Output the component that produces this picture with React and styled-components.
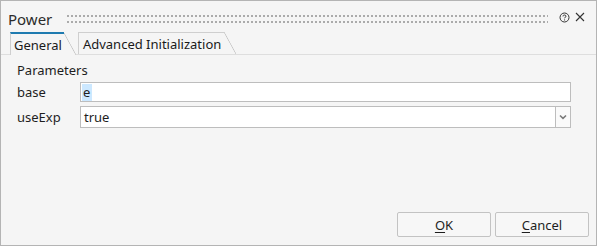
import React from 'react';
import styled, { createGlobalStyle } from 'styled-components';

const GlobalStyle = createGlobalStyle`
    html, body {
        margin: 0;
        padding: 0;
        background: #f5f5f5;
    }
    * {
        box-sizing: border-box;
    }
`;

const Dialog = styled.div`
    width: 597px;
    height: 246px;
    display: flex;
    flex-direction: column;
    border: 1px solid #b4b4b4;
    background: #f5f5f5;
    font-family: "Noto Sans", "Open Sans", sans-serif;
    font-size: 13px;
    color: #1e1e1e;
`;

const TitleBar = styled.div`
    height: 30px;
    display: flex;
    align-items: flex-start;
    padding: 0 9px 0 7px;
`;

const Title = styled.div`
    margin-top: 8px;
    font-size: 15px;
    line-height: 20px;
    color: #2b2b2b;
`;

// two rows of small dots used as the drag handle
const Grip = styled.div`
    flex: 1;
    height: 8px;
    margin: 14px 9px 0 15px;
    background: repeating-linear-gradient(90deg, #ababab 0 2px, transparent 2px 4px);
    mask-image: repeating-linear-gradient(180deg, #000 0 2px, transparent 2px 6px);
    -webkit-mask-image: repeating-linear-gradient(180deg, #000 0 2px, transparent 2px 6px);
`;

const IconButton = styled.span`
    display: flex;
    align-items: center;
    justify-content: center;
    width: 14px;
    height: 14px;
    margin-top: 9px;
    margin-left: ${p => p.gap || 0}px;
    color: #333;
`;

const TabBar = styled.div`
    display: flex;
    align-items: flex-end;
    height: 24px;
    padding-left: 9px;
    border-bottom: 1px solid #dedede;
`;

const Tab = styled.div`
    position: relative;
    height: ${p => (p.active ? 23 : 22)}px;
    margin-right: 14px;
    padding: ${p => (p.active ? '0 2px 0 3px' : '0 3px 0 4px')};
    display: flex;
    align-items: center;
    border-left: 1px solid #cfcfcf;
    border-top: ${p => (p.active ? '2px solid #1f7bb0' : '1px solid #cfcfcf')};
    color: #1a1a1a;
    margin-bottom: ${p => (p.active ? '-1px' : '0')};
    background: #f5f5f5;

    &::after {
        content: '';
        position: absolute;
        top: -1px;
        right: -12px;
        width: 12px;
        bottom: 0;
        background: linear-gradient(
            to top right,
            #f5f5f5 calc(50% - 0.7px),
            #c4c4c4 50%,
            transparent calc(50% + 0.7px)
        );
    }
`;

const Body = styled.div`
    flex: 1;
    padding: 6px 25px 0 16px;
    display: flex;
    flex-direction: column;
`;

const SectionLabel = styled.div`
    height: 18px;
    line-height: 18px;
    margin-bottom: 3px;
`;

const FieldRow = styled.div`
    display: flex;
    align-items: center;
    height: ${p => p.h}px;
    margin-bottom: 4px;
`;

const FieldLabel = styled.div`
    width: 63px;
`;

const TextBox = styled.div`
    flex: 1;
    height: 100%;
    display: flex;
    align-items: center;
    padding-left: 1px;
    background: #fff;
    border: 1px solid #bdbdbd;
`;

const Selected = styled.span`
    background: #cce8ff;
    padding: 0 2px 0 1px;
    line-height: 17px;
`;

const SelectBox = styled.div`
    flex: 1;
    height: 100%;
    display: flex;
    background: #fff;
    border: 1px solid #bdbdbd;
`;

const SelectValue = styled.div`
    flex: 1;
    display: flex;
    align-items: center;
    padding-left: 3px;
`;

const DropButton = styled.div`
    width: 15px;
    display: flex;
    align-items: center;
    justify-content: center;
    border-left: 1px solid #bdbdbd;
    background: #fafafa;
`;

const Footer = styled.div`
    display: flex;
    justify-content: flex-end;
    gap: 4px;
    padding: 0 7px 8px 0;
`;

const Button = styled.button`
    width: 94px;
    height: 25px;
    border: 1px solid #c3c3c3;
    border-radius: 2px;
    background: #f7f7f7;
    font-family: inherit;
    font-size: 13px;
    color: #1e1e1e;
    padding: 0;
    u {
        text-decoration-thickness: 1px;
        text-underline-offset: 2px;
    }
`;

export default function App() {
    return (
        <>
            <GlobalStyle />
            <Dialog>
                <TitleBar>
                    <Title>Power</Title>
                    <Grip />
                    <IconButton>
                        <svg width="11" height="11" viewBox="0 0 11 11" fill="none" stroke="#333" strokeWidth="1">
                            <circle cx="5.5" cy="5.5" r="4.5" />
                            <path d="M4 4.4 C4 3.4 4.7 3 5.5 3 C6.4 3 7 3.5 7 4.2 C7 5.1 5.6 5.2 5.6 6.3" />
                            <circle cx="5.6" cy="7.9" r="0.55" fill="#333" stroke="none" />
                        </svg>
                    </IconButton>
                    <IconButton gap={2}>
                        <svg width="10" height="10" viewBox="0 0 10 10" stroke="#333" strokeWidth="1.1">
                            <path d="M1 1 L9 9 M9 1 L1 9" />
                        </svg>
                    </IconButton>
                </TitleBar>
                <TabBar>
                    <Tab active>General</Tab>
                    <Tab>Advanced Initialization</Tab>
                </TabBar>
                <Body>
                    <SectionLabel>Parameters</SectionLabel>
                    <FieldRow h={20}>
                        <FieldLabel>base</FieldLabel>
                        <TextBox>
                            <Selected>e</Selected>
                        </TextBox>
                    </FieldRow>
                    <FieldRow h={22}>
                        <FieldLabel>useExp</FieldLabel>
                        <SelectBox>
                            <SelectValue>true</SelectValue>
                            <DropButton>
                                <svg width="8" height="6" viewBox="0 0 8 6" fill="none" stroke="#7a7a7a" strokeWidth="1.6">
                                    <path d="M1 1.5 L4 4.3 L7 1.5" />
                                </svg>
                            </DropButton>
                        </SelectBox>
                    </FieldRow>
                </Body>
                <Footer>
                    <Button><u>O</u>K</Button>
                    <Button><u>C</u>ancel</Button>
                </Footer>
            </Dialog>
        </>
    );
}
